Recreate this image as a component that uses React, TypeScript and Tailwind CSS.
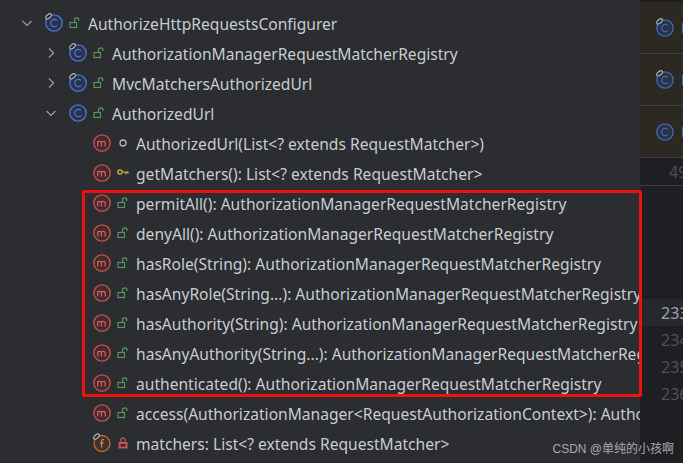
const font = { fontFamily: '"Noto Sans", sans-serif' };

const ClassIcon = ({ pinned, dim }: { pinned?: boolean; dim?: boolean }) => (
	<svg width="20" height="20" viewBox="0 0 20 20" fill="none" className="shrink-0">
		<circle cx="9" cy="10" r="8.2" fill={dim ? '#2a3345' : '#2b3350'} stroke={dim ? '#3f69b5' : '#4a78d0'} strokeWidth="1.3" />
		<path d="M12 7.4a3.7 3.7 0 1 0 0 5.2" stroke={dim ? '#3f69b5' : '#4a78d0'} strokeWidth="1.2" />
		{pinned && <ellipse cx="3.5" cy="3.4" rx="3.4" ry="1.8" transform="rotate(-40 3.5 3.4)" fill="#2b2d30" stroke="#b4b6ba" strokeWidth="1.1" />}
	</svg>
);

const MethodIcon = () => (
	<svg width="18" height="18" viewBox="0 0 18 18" fill="none" className="shrink-0">
		<circle cx="9" cy="9" r="8.2" fill="#432b2d" stroke="#c75450" strokeWidth="1.3" />
		<path d="M4.8 12.6V7M4.8 8.3c.5-1.1 3.1-1.7 3.6.3v4M8.4 8.3c.6-1.1 3.3-1.6 3.8.3v4" stroke="#d9605c" strokeWidth="1.2" />
	</svg>
);

const FieldIcon = () => (
	<svg width="20" height="20" viewBox="0 0 20 20" fill="none" className="shrink-0">
		<circle cx="9" cy="10.5" r="8" fill="#45322a" stroke="#b56e3c" strokeWidth="1.3" />
		<path d="M11 6.9c-1.5-.6-2.4 0-2.4 1.5V14.5M7 9.8h3.6" stroke="#c88a5c" strokeWidth="1.2" />
		<ellipse cx="3.5" cy="3.6" rx="3.4" ry="1.8" transform="rotate(-40 3.5 3.6)" fill="#2b2d30" stroke="#b4b6ba" strokeWidth="1.1" />
	</svg>
);

const OpenLock = () => (
	<svg width="12" height="12" viewBox="0 0 12 12" fill="none" className="shrink-0">
		<rect x="1" y="5.5" width="6.5" height="5" stroke="#57965c" strokeWidth="1.2" />
		<path d="M5.5 5.5V3a2.2 2.2 0 0 1 4.4 0v1" stroke="#57965c" strokeWidth="1.2" />
	</svg>
);

const ClosedLock = () => (
	<svg width="12" height="12" viewBox="0 0 12 12" fill="none" className="shrink-0">
		<rect x="2" y="5.5" width="8" height="5.5" fill="#c75450" stroke="#c75450" />
		<path d="M3.8 5.5V3.4a2.2 2.2 0 0 1 4.4 0v2.1" stroke="#c75450" strokeWidth="1.2" />
		<rect x="3.5" y="7" width="5" height="2.5" fill="#2b2d30" />
	</svg>
);

const KeyIcon = () => (
	<svg width="12" height="12" viewBox="0 0 12 12" fill="none" className="shrink-0">
		<circle cx="3" cy="5" r="2.2" stroke="#e0b64e" strokeWidth="1.2" />
		<path d="M5.2 5H11.5M9 5v2.2M11 5v1.6" stroke="#e0b64e" strokeWidth="1.2" />
	</svg>
);

const CircleDot = () => (
	<svg width="12" height="12" viewBox="0 0 12 12" fill="none" className="shrink-0">
		<circle cx="6" cy="6" r="3" stroke="#b4b6ba" strokeWidth="1.3" />
	</svg>
);

const Chevron = ({ open }: { open: boolean }) => (
	<svg width="12" height="12" viewBox="0 0 12 12" fill="none" className="shrink-0">
		<path d={open ? 'M1.5 4l4.5 4.5L10.5 4' : 'M4 1.5L8.5 6 4 10.5'} stroke="#9da0a8" strokeWidth="1.2" />
	</svg>
);

type Row = {
	indent: string;
	chevron?: boolean;
	open?: boolean;
	icon: 'class' | 'pinned' | 'method' | 'field';
	access: 'open' | 'closed' | 'key' | 'dot';
	label: string;
};

const rows: Row[] = [
	{ indent: 'pl-[45px]', chevron: true, open: true, icon: 'pinned', access: 'open', label: 'AuthorizeHttpRequestsConfigurer' },
	{ indent: 'pl-[69px]', chevron: true, icon: 'pinned', access: 'open', label: 'AuthorizationManagerRequestMatcherRegistry' },
	{ indent: 'pl-[69px]', chevron: true, icon: 'pinned', access: 'open', label: 'MvcMatchersAuthorizedUrl' },
	{ indent: 'pl-[69px]', chevron: true, open: true, icon: 'class', access: 'open', label: 'AuthorizedUrl' },
	{ indent: 'pl-[93px]', icon: 'method', access: 'dot', label: 'AuthorizedUrl(List<? extends RequestMatcher>)' },
	{ indent: 'pl-[93px]', icon: 'method', access: 'key', label: 'getMatchers(): List<? extends RequestMatcher>' },
	{ indent: 'pl-[93px]', icon: 'method', access: 'open', label: 'permitAll(): AuthorizationManagerRequestMatcherRegistry' },
	{ indent: 'pl-[93px]', icon: 'method', access: 'open', label: 'denyAll(): AuthorizationManagerRequestMatcherRegistry' },
	{ indent: 'pl-[93px]', icon: 'method', access: 'open', label: 'hasRole(String): AuthorizationManagerRequestMatcherRegistry' },
	{ indent: 'pl-[93px]', icon: 'method', access: 'open', label: 'hasAnyRole(String...): AuthorizationManagerRequestMatcherRegistry' },
	{ indent: 'pl-[93px]', icon: 'method', access: 'open', label: 'hasAuthority(String): AuthorizationManagerRequestMatcherRegistry' },
	{ indent: 'pl-[93px]', icon: 'method', access: 'open', label: 'hasAnyAuthority(String...): AuthorizationManagerRequestMatcherRegistry' },
	{ indent: 'pl-[93px]', icon: 'method', access: 'open', label: 'authenticated(): AuthorizationManagerRequestMatcherRegistry' },
	{ indent: 'pl-[93px]', icon: 'method', access: 'open', label: 'access(AuthorizationManager<RequestAuthorizationContext>): AuthorizationManagerRequestMatcherRegistry' },
	{ indent: 'pl-[93px]', icon: 'field', access: 'closed', label: 'matchers: List<? extends RequestMatcher>' },
];

const TreeRow = ({ row }: { row: Row }) => (
	<div className={`flex h-[30px] items-center whitespace-nowrap text-[15.6px] text-[#c8ccd3] ${row.indent}`}>
		{row.chevron && (
			<span className="-ml-[24px] mr-[12px] flex w-[12px] shrink-0">
				<Chevron open={!!row.open} />
			</span>
		)}
		<span className="flex w-[24px] shrink-0">
			{row.icon === 'method' && <MethodIcon />}
			{row.icon === 'class' && <ClassIcon />}
			{row.icon === 'pinned' && <ClassIcon pinned />}
			{row.icon === 'field' && <FieldIcon />}
		</span>
		<span className="flex w-[19px] shrink-0">
			{row.access === 'open' && <OpenLock />}
			{row.access === 'closed' && <ClosedLock />}
			{row.access === 'key' && <KeyIcon />}
			{row.access === 'dot' && <CircleDot />}
		</span>
		<span className="mt-[3px]">{row.label}</span>
	</div>
);

const TabRow = ({ pinned }: { pinned?: boolean }) => (
	<div className="flex h-[52px] items-center border-b border-[#3d3e42] pl-[16px]">
		<ClassIcon pinned={pinned} dim />
		<span className="ml-[6px] h-[10px] w-[4px] shrink-0 bg-[#3f69b5]" />
	</div>
);

const lineNumbers = [
	{ n: '233', active: true },
	{ n: '234' },
	{ n: '235' },
	{ n: '236' },
];

export default function App() {
	return (
		<div className="relative flex h-[463px] w-[683px] overflow-hidden bg-[#1e1f22]" style={font}>
			<div className="h-full w-[640px] shrink-0 overflow-hidden bg-[#2b2d30] pt-[8px]">
				{rows.map((row) => (
					<TreeRow key={row.label} row={row} />
				))}
			</div>

			<div className="min-w-0 flex-1 overflow-hidden">
				<div className="border-t-2 border-[#1e1f22] bg-[#2c2822]">
					<TabRow pinned />
					<TabRow pinned />
					<TabRow />
				</div>
				<div className="flex h-[28px] items-center border-b border-[#3d3e42] pl-[29px] text-[16px] leading-none text-[#4e5157]">49</div>
				<div className="mt-[113px] flex flex-col whitespace-nowrap text-[16px] leading-none text-[#4e5157]">
					{lineNumbers.map((line) => (
						<div
							key={line.n}
							className={`flex h-[27px] items-center pl-[21px] ${line.active ? 'bg-[#26282e] text-[#a1a3ab]' : ''}`}
						>
							{line.n}
						</div>
					))}
				</div>
			</div>

			{/* red annotation drawn over the tree */}
			<div className="absolute left-[82px] top-[190px] h-[207px] w-[560px] rounded-[2px] border-[3px] border-[#f01010]" />

			<div className="absolute bottom-[5px] right-[9px] whitespace-nowrap text-[12px] text-[#a9aaab]" style={{ fontFamily: '"Liberation Sans", "Noto Sans CJK SC", sans-serif' }}>
				CSDN @单纯的小孩啊
			</div>
		</div>
	);
}
